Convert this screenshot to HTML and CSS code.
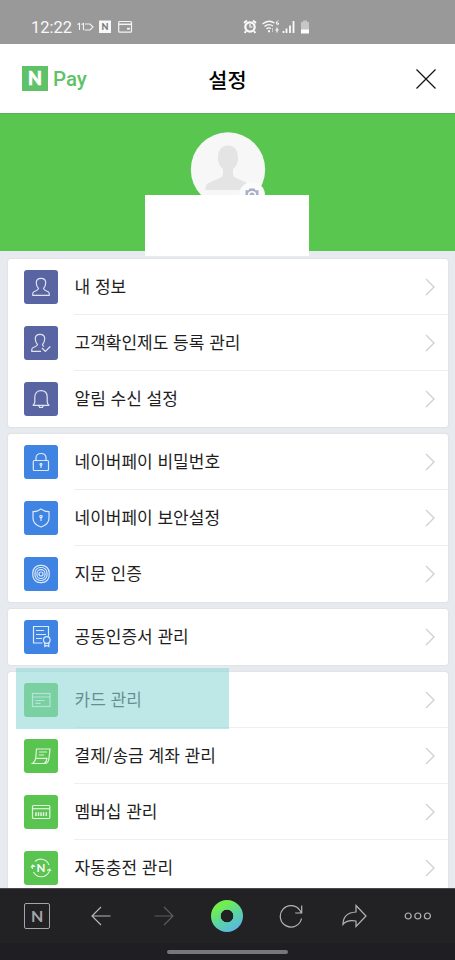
FILE: index.html
```html
<!DOCTYPE html>
<html lang="ko">
<head>
<meta charset="utf-8">
<title>설정</title>
<link rel="stylesheet" href="styles.css">
</head>
<body>
<div class="phone">
  <div class="status">
    <span class="clock">12:22</span>
    <svg class="st-left" width="60" height="16" viewBox="0 0 60 16" fill="none" stroke="#f4f4f4">
      <path d="M.5 5.500l2-1V11M4.500 5.500l2-1V11" stroke-width="1.100"/>
      <path d="M8 5h5l3 3-3 3H7.500" stroke-width="1.200"/>
      <rect x="22" y="1.500" width="12" height="12.500" fill="#f8f8f8" stroke="none"/>
      <text x="28" y="11" text-anchor="middle" class="n-mini">N</text>
      <rect x="41.700" y="2.500" width="12.800" height="10.700" rx="1" stroke-width="1.200"/>
      <path d="M42 5.300h12" stroke-width="1.500"/><path d="M50 9.700h3" stroke-width="1.800"/>
    </svg>
    <svg class="st-right" width="70" height="16" viewBox="0 0 70 16" fill="none" stroke="#fafafa">
      <circle cx="7" cy="8" r="4.700" fill="#999" stroke-width="2.200"/>
      <path d="M7 5v3h2.500" stroke-width="1.200"/>
      <path d="M1 4l3-2.500M13 4l-3-2.500M3 12l-1.300 2M11 12l1.300 2" stroke-width="1.900"/>
      <path d="M19.500 5q6-5 12-1M21.500 7.500q4.200-3.500 8.500-.5M23.500 10q2-2 4.500-.5" stroke-width="1.400"/>
      <path d="M25 12.300h2" stroke-width="2"/>
      <path d="M29.500 9v4" stroke="#ccc"/><path d="M34 8.500v5M32.300 11h3.400" stroke-width="1.200"/>
      <path d="M35 1.500q-2 1.500-1.700 3.500 1.500 1.500 2.500 0 0-1.500-2-1" stroke-width="1"/>
      <path d="M40.500 12v2M43.500 9.500V14M47 6.500V14M50.500 2V14" stroke-width="1.800"/>
      <path d="M60 1.500h4V3h2v8h-8V3h2z" fill="#c6c6c6" stroke="none"/>
      <path d="M58 10.500h8v4h-8z" fill="#fff" stroke="none"/>
    </svg>
  </div>

  <header class="header">
    <div class="brand"><span class="brand-n">N</span><span class="brand-pay">Pay</span></div>
    <h1 class="title">설정</h1>
    <svg class="close" width="22" height="22" viewBox="0 0 22 22" stroke="#111" stroke-width="1.200"><path d="M1.500 1.500l19 19M20.500 1.500l-19 19"/></svg>
  </header>

  <section class="hero">
    <svg class="avatar" width="76" height="76" viewBox="0 0 76 76">
      <circle cx="38" cy="37.500" r="37.200" fill="#f7f7f7"/>
      <path d="M15.500 58v-1.500c0-5 5-6.500 11-9 5-2 6.500-2.500 6.500-6.500v-4c-4-3-5-7-5-11 0-8 4-12.500 10-12.500s10 4.500 10 12.500c0 4-1 8-5 11v4c0 4 1.500 4.500 6.500 6.500 6 2.500 11 4 11 9V58z" fill="#e4e4e4"/>
      <circle cx="62" cy="63" r="13" fill="#fbfbfb"/>
      <path d="M55.500 58.300h3l1-1.800h5l1 1.800h3v9h-13z" fill="#a9afc5"/>
      <circle cx="62" cy="63" r="3.300" fill="#a9afc5" stroke="#fff" stroke-width="1.600"/>
    </svg>
    <div class="mask"></div>
  </section>

  <main class="content">
    <ul class="card">
      <li class="row"><span class="icon indigo"><svg viewBox="0 0 34 34"><path d="M8.800 25.400v-2.200c0-2.500 5.400-2 5.700-4.700-1.800-1.500-2.200-4-2.200-6 0-2.700 2-4.200 4.700-4.200s4.700 1.500 4.700 4.200c0 2-.4 4.500-2.200 6 .3 2.700 5.700 2.200 5.700 4.700v2.200z"/></svg></span><span class="label">내 정보</span><svg class="chev" viewBox="0 0 10 18"><path d="M1 1l8 8-8 8"/></svg></li>
      <li class="row"><span class="icon indigo"><svg viewBox="0 0 34 34"><path d="M17 25.400H7.800v-2.200c0-2.500 5.400-2 5.700-4.700-1.800-1.500-2.200-4-2.200-6 0-2.700 2-4.200 4.700-4.200s4.700 1.500 4.700 4.200c0 2-.4 4.500-2.200 6 .1 1 .7 1.600 1.500 2M18 22l3.300 3.500 5-5"/></svg></span><span class="label">고객확인제도 등록 관리</span><svg class="chev" viewBox="0 0 10 18"><path d="M1 1l8 8-8 8"/></svg></li>
      <li class="row"><span class="icon indigo"><svg viewBox="0 0 34 34"><path d="M8.800 23.300c1.700-.8 2-2 2-3.500V15c0-4 2.500-6.300 6.200-6.300s6.200 2.300 6.200 6.300v4.800c0 1.500.3 2.700 2 3.500zM14.500 23.300q.5 2.200 2.500 2.200t2.500-2.200"/></svg></span><span class="label">알림 수신 설정</span><svg class="chev" viewBox="0 0 10 18"><path d="M1 1l8 8-8 8"/></svg></li>
    </ul>

    <ul class="card">
      <li class="row"><span class="icon blue"><svg viewBox="0 0 34 34"><rect x="9.300" y="15.500" width="15.200" height="10" rx="1"/><path d="M12 15.500V13c0-3 2-4.500 5-4.500s5 1.500 5 4.500v2.500M17 20v3"/><circle cx="17" cy="19.300" r="1"/></svg></span><span class="label">네이버페이 비밀번호</span><svg class="chev" viewBox="0 0 10 18"><path d="M1 1l8 8-8 8"/></svg></li>
      <li class="row"><span class="icon blue"><svg viewBox="0 0 34 34"><path d="M17 8c2.500 2 5 2.700 8 2.700V17c0 4.500-3.500 7.500-8 9-4.500-1.500-8-4.500-8-9v-6.300c3 0 5.500-.7 8-2.700zM17 16v4"/><circle cx="17" cy="15.500" r="1.200"/></svg></span><span class="label">네이버페이 보안설정</span><svg class="chev" viewBox="0 0 10 18"><path d="M1 1l8 8-8 8"/></svg></li>
      <li class="row"><span class="icon blue"><svg viewBox="0 0 34 34"><rect x="8.800" y="8.300" width="16.400" height="17.400" rx="7.500"/><rect x="11" y="10.500" width="12" height="13" rx="5.500"/><rect x="13" y="12.700" width="8" height="8.800" rx="3.800"/><circle cx="17" cy="17" r="2"/></svg></span><span class="label">지문 인증</span><svg class="chev" viewBox="0 0 10 18"><path d="M1 1l8 8-8 8"/></svg></li>
    </ul>

    <ul class="card">
      <li class="row"><span class="icon blue"><svg viewBox="0 0 34 34"><path d="M18.500 23h-9V6.500h15v10M12 10.500h8M12 14.500h10M12 18.500h6"/><circle cx="22.800" cy="20" r="3.300"/><path d="M20.800 23v3.500l2-1 2 1V23"/></svg></span><span class="label">공동인증서 관리</span><svg class="chev" viewBox="0 0 10 18"><path d="M1 1l8 8-8 8"/></svg></li>
    </ul>

    <ul class="card">
      <li class="row"><span class="icon green"><svg viewBox="0 0 34 34"><rect x="8.500" y="10.500" width="17.500" height="13"/><path d="M8.500 14h17.500M11.500 17.500h9M11.500 20.300h5"/></svg></span><span class="label">카드 관리</span><svg class="chev" viewBox="0 0 10 18"><path d="M1 1l8 8-8 8"/></svg><span class="highlight"></span></li>
      <li class="row"><span class="icon green"><svg viewBox="0 0 34 34"><path d="M11.700 19.300l.8-9.300H26l-1 9c-.3 3-1.500 5.500-4 5.500H8.500c1.700-1 2.700-3 3.200-5.200H23c-.3 2.200-1 4-2.500 5M15 13h8M14.700 16h5.500"/></svg></span><span class="label">결제/송금 계좌 관리</span><svg class="chev" viewBox="0 0 10 18"><path d="M1 1l8 8-8 8"/></svg></li>
      <li class="row"><span class="icon green"><svg viewBox="0 0 34 34"><rect x="8.500" y="10.500" width="17.300" height="13" rx="1"/><path d="M8.500 13.700h17"/><path d="M12 17.200v3.800M14.500 17.200v3.800M17 17.200v3.800M19.500 17.200v3.800M22.300 17.200v3.800" stroke-width="1.500"/></svg></span><span class="label">멤버십 관리</span><svg class="chev" viewBox="0 0 10 18"><path d="M1 1l8 8-8 8"/></svg></li>
      <li class="row"><span class="icon green"><svg viewBox="0 0 34 34"><path d="M11 10.500a8.700 8.700 0 0 1 14 3.500M8.600 14.500a8.700 8.700 0 0 0-.1 3.500M9.500 21a8.700 8.700 0 0 0 15.500 0q.6-1.300.7-2.500M7 16.500l1.500-2.500 2.700 1.500M23 19.500l2.700-1.500 1.300 2"/><text x="17" y="21.200" text-anchor="middle" class="n-icon">N</text></svg></span><span class="label">자동충전 관리</span><svg class="chev" viewBox="0 0 10 18"><path d="M1 1l8 8-8 8"/></svg></li>
    </ul>
  </main>

  <nav class="toolbar">
    <div class="tools">
      <span class="tool"><span class="nbox">N</span></span>
      <span class="tool"><svg width="20" height="20" viewBox="0 0 20 20"><path d="M19.500 10H1M10 1l-9 9 9 9"/></svg></span>
      <span class="tool dim"><svg width="20" height="20" viewBox="0 0 20 20"><path d="M.5 10H19M10 1l9 9-9 9"/></svg></span>
      <span class="tool"><span class="ring"></span></span>
      <span class="tool"><svg width="24" height="24" viewBox="0 0 24 24"><path d="M22.500 14.500A10.700 10.700 0 1 1 21 6.500l1.500 2.500M22.700 1.500V9h-6.500"/></svg></span>
      <span class="tool"><svg width="26" height="24" viewBox="0 0 26 24"><path d="M15 1.500l10 10.500-10 10.500V17C9 16 4.500 17 2 20.500 2 13 6.500 8.500 15 8z"/></svg></span>
      <span class="tool"><svg width="28" height="8" viewBox="0 0 28 8"><circle cx="4.200" cy="4" r="3"/><circle cx="13.800" cy="4" r="3"/><circle cx="23.400" cy="4" r="3"/></svg></span>
    </div>
    <div class="gesture"><span class="pill"></span></div>
  </nav>
</div>
</body>
</html>
```
FILE: styles.css
```css
* { box-sizing: border-box; }
body { margin: 0; font-family: "Noto Sans CJK KR", sans-serif; background: #e7eaee; }
.phone { width: 455px; height: 960px; display: flex; flex-direction: column; overflow: hidden; }

.status { height: 44px; flex: none; background: #999; display: flex; align-items: center; padding: 10px 0 0 31px; }
.clock { font: 400 16.500px/20px Roboto, sans-serif; color: #f8f8f8; width: 46px; padding-top: 1px; }
.st-left { flex: none; }
.st-right { flex: none; margin-left: 106px; }
.n-mini { font: 900 9px Lato, sans-serif; fill: #777; stroke: none; }

.header { height: 69px; flex: none; background: #fff; display: grid; grid-template-columns: 1fr auto 1fr; align-items: center; padding: 0 18px 0 22px; }
.brand { display: flex; align-items: center; gap: 5px; }
.brand-n { width: 26px; height: 25px; background: #5fc268; color: #fff; font: 900 18px/25px Lato, sans-serif; text-align: center; -webkit-text-stroke: .6px #fff; }
.brand-pay { font: 500 20.500px/24px Roboto, sans-serif; color: #5fc268; }
.title { margin: 1px 4px 0 0; font-size: 20.800px; line-height: 30px; font-weight: 500; color: #000; }
.close { justify-self: end; }

.hero { height: 138px; flex: none; background: #59c650; border-top: 1px solid #5caf55; position: relative; display: flex; justify-content: center; align-items: flex-start; padding-top: 18px; }
.mask { position: absolute; left: 145px; top: 81px; width: 164px; height: 61px; background: #fff; }

.content { flex: 1; min-height: 0; overflow: hidden; padding: 8px 7px 0 8px; display: flex; flex-direction: column; gap: 6.800px; background: #e7eaee; }
.card { flex: none; list-style: none; margin: 0; padding: 0; background: #fff; border-radius: 3px; box-shadow: 0 0 1px 1px #e0e3e7; }
.row { height: 56.100px; display: flex; align-items: center; padding: 0 13px 0 16px; position: relative; background: linear-gradient(#eee, #eee) right bottom / calc(100% - 66px) 1px no-repeat; }
.row:last-child { background: none; }
.icon { width: 34px; height: 34px; border-radius: 3px; flex: none; }
.icon svg { display: block; width: 34px; height: 34px; fill: none; stroke: rgba(255,255,255,.82); stroke-width: 1.200; }
.indigo { background: #5965a3; }
.blue { background: #3f83e3; }
.green { background: #59c44f; }
.n-icon { font: 700 11.500px Lato, sans-serif; fill: #fff; stroke: none; }
.label { flex: 1; margin-left: 16.500px; padding-bottom: 2px; font-size: 17px; line-height: 24px; color: #1e1e1e; white-space: nowrap; }
.chev { width: 10px; height: 18px; fill: none; stroke: #cfcfcf; stroke-width: 1.300; }
.highlight { position: absolute; left: 8px; top: -4px; width: 213px; height: 61px; background: rgba(147,217,217,.6); z-index: 2; }

.toolbar { height: 72px; flex: none; background: #222224; border-top: 1px solid #4a4a4b; }
.tools { height: 54px; display: grid; grid-template-columns: repeat(7, 63.400px); padding-left: 5.500px; }
.tool { display: flex; align-items: center; justify-content: center; }
.tool svg { fill: none; stroke: #b5b5b5; stroke-width: 1.200; }
.dim svg { stroke: #5d5d60; }
.nbox { width: 26px; height: 26px; border: 1px solid #a5a5a8; border-radius: 2px; color: #a5a5a8; font: 700 16px/24px Lato, sans-serif; text-align: center; }
.ring { width: 32px; height: 32px; border-radius: 50%; background: radial-gradient(circle, #222224 6px, transparent 6.600px), linear-gradient(150deg, #71ed52 25%, #59d4a6 55%, #5bb4e8 90%); }
.gesture { height: 17px; background: #1f1e23; display: flex; justify-content: center; padding-top: 7px; }
.pill { width: 121px; height: 4px; border-radius: 2px; background: #77777b; }
```
